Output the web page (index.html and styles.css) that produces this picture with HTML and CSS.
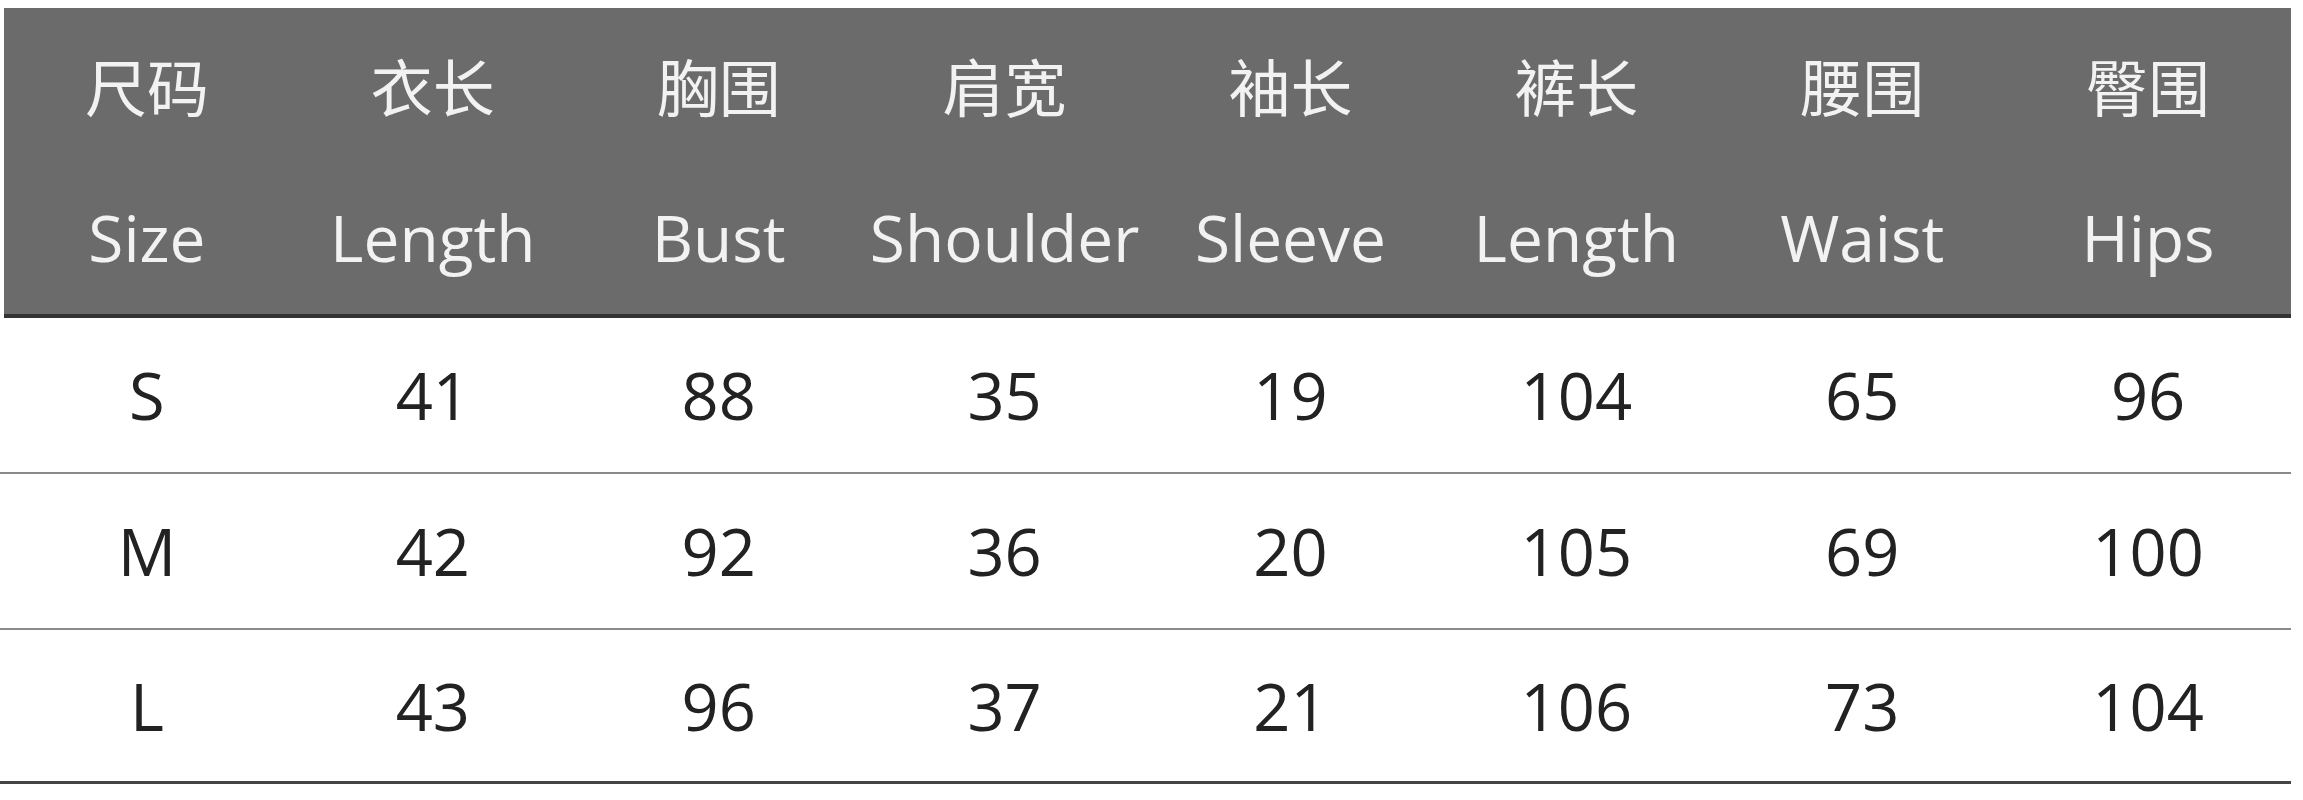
FILE: index.html
```html
<!DOCTYPE html>
<html lang="zh-CN">
<head>
<meta charset="utf-8">
<title>尺码表</title>
<link rel="stylesheet" href="styles.css">
</head>
<body>
<div class="size-table">
  <div class="head">
    <div class="head-row cn">
      <div class="cell">尺码</div>
      <div class="cell">衣长</div>
      <div class="cell">胸围</div>
      <div class="cell">肩宽</div>
      <div class="cell">袖长</div>
      <div class="cell">裤长</div>
      <div class="cell">腰围</div>
      <div class="cell">臀围</div>
    </div>
    <div class="head-row en">
      <div class="cell">Size</div>
      <div class="cell">Length</div>
      <div class="cell">Bust</div>
      <div class="cell">Shoulder</div>
      <div class="cell">Sleeve</div>
      <div class="cell">Length</div>
      <div class="cell">Waist</div>
      <div class="cell">Hips</div>
    </div>
  </div>
  <div class="row">
    <div class="cell">S</div>
    <div class="cell">41</div>
    <div class="cell">88</div>
    <div class="cell">35</div>
    <div class="cell">19</div>
    <div class="cell">104</div>
    <div class="cell">65</div>
    <div class="cell">96</div>
  </div>
  <div class="row">
    <div class="cell">M</div>
    <div class="cell">42</div>
    <div class="cell">92</div>
    <div class="cell">36</div>
    <div class="cell">20</div>
    <div class="cell">105</div>
    <div class="cell">69</div>
    <div class="cell">100</div>
  </div>
  <div class="row last">
    <div class="cell">L</div>
    <div class="cell">43</div>
    <div class="cell">96</div>
    <div class="cell">37</div>
    <div class="cell">21</div>
    <div class="cell">106</div>
    <div class="cell">73</div>
    <div class="cell">104</div>
  </div>
</div>
</body>
</html>
```

FILE: styles.css
```css
html, body {
  margin: 0;
  padding: 0;
  background: #ffffff;
}

body {
  font-family: "Open Sans", "Noto Sans", "Noto Sans CJK SC", sans-serif;
}

.size-table {
  width: 2291px;
  padding-top: 8px;
}

.head {
  margin-left: 4px;
  background: #6b6b6b;
  border-bottom: 4px solid #333333;
  color: #f2f2f2;
}

.head-row {
  display: grid;
  grid-template-columns: repeat(8, 1fr);
  height: 153px;
}

.head-row.cn {
  font-family: "Noto Sans CJK SC", sans-serif;
  font-size: 62px;
  padding-top: 0;
}

.head-row.en {
  font-size: 64px;
}

.cell {
  display: flex;
  align-items: center;
  justify-content: center;
  white-space: nowrap;
}

.row {
  display: grid;
  grid-template-columns: repeat(8, 1fr);
  padding-left: 4px;
  height: 154px;
  border-bottom: 2px solid #8a8a8a;
  font-size: 65px;
  color: #222222;
}

.row.last {
  height: 151px;
  border-bottom: 3px solid #444444;
}
```
